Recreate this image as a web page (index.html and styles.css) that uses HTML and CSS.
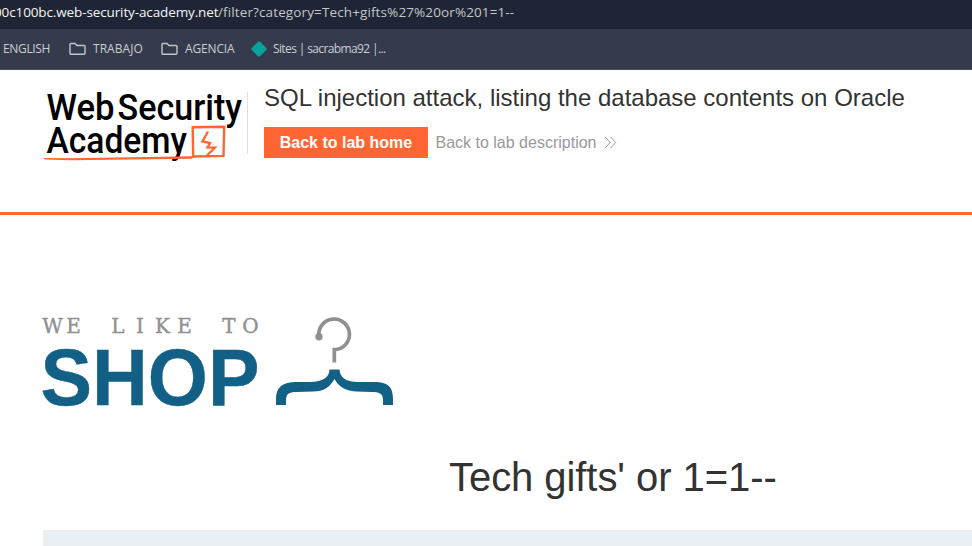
FILE: index.html
```html
<!DOCTYPE html>
<html lang="en">
<head>
<meta charset="utf-8">
<title>SQL injection attack, listing the database contents on Oracle</title>
<link rel="stylesheet" href="styles.css">
</head>
<body>
<div class="address-bar"><span class="host">00c100bc.web-security-academy.net</span><span class="path">/filter?category=Tech+gifts%27%20or%201=1--</span></div>
<nav class="bookmarks">
  <span class="bookmark english">ENGLISH</span>
  <span class="bookmark trabajo"><svg class="folder" viewBox="0 0 17 14"><path d="M1 11V2.5Q1 1.5 2 1.5H6L8 3.5H15Q16 3.5 16 4.5V11.3Q16 12.3 15 12.3H2Q1 12.3 1 11Z"/></svg><span class="label">TRABAJO</span></span>
  <span class="bookmark agencia"><svg class="folder" viewBox="0 0 17 14"><path d="M1 11V2.5Q1 1.5 2 1.5H6L8 3.5H15Q16 3.5 16 4.5V11.3Q16 12.3 15 12.3H2Q1 12.3 1 11Z"/></svg><span class="label">AGENCIA</span></span>
  <span class="bookmark sites"><svg class="diamond" viewBox="0 0 16 16"><path d="M7 .7Q8 0 9 .7L15.3 7Q16 8 15.3 9L9 15.3Q8 16 7 15.3L.7 9Q0 8 .7 7Z"/></svg><span class="label">Sites | sacrabma92 |...</span></span>
</nav>
<header class="lab-header">
  <svg class="academy-logo" viewBox="0 0 205 80">
    <g class="academy-name">
      <text x="3.5" y="35" textLength="68" lengthAdjust="spacingAndGlyphs">Web</text>
      <text x="74.5" y="35" textLength="124.5" lengthAdjust="spacingAndGlyphs">Security</text>
      <text x="3.5" y="68" textLength="140.5" lengthAdjust="spacingAndGlyphs">Academy</text>
    </g>
    <path class="underline" d="M0 73L28 73.2L149 71.3V73.7L28 75.3L2 74.6Z"/>
    <path class="frame" d="M150.2 73L149.7 42.2L181.2 41.8L180.5 70.9L150 71.5"/>
    <path class="bolt" d="M165 46.5L159.5 56.5L167 58L164.5 62.3L172 62.5L164 70.5"/>
  </svg>
  <div class="lab-info">
    <h2>SQL injection attack, listing the database contents on Oracle</h2>
    <div class="actions">
      <a class="home-button">Back to lab home</a>
      <a class="description-link">Back to lab description</a>
      <svg class="chevrons" viewBox="0 0 13 13"><path d="M1 .8L6.2 6.5L1 12.2M6.5 .8L11.7 6.5L6.5 12.2"/></svg>
    </div>
  </div>
</header>
<main>
  <svg class="shop-logo" viewBox="0 0 352 92">
    <text class="tagline" y="18.3" x="9.5 30.5 75 97 119.5 141.5 186 207.5">WELIKETO</text>
    <text class="shop" x="-2.5" y="89.7" textLength="219" lengthAdjust="spacingAndGlyphs">SHOP</text>
    <circle class="knob" cx="276" cy="21.8" r="3.7"/>
    <path class="hook" d="M276 21.5A15.3 15.3 0 1 1 292 34.6H291.3V47.5"/>
    <path class="hanger" d="M286.5 54.5H296.5C297 62 302 67 315 67H331C345 67 350 72 350 84V90H340V85C340 78 336 77 328 77L314 76.5C303 76 295.5 72 291.5 64C287 72 281 76.5 270 76.5L253 77C246 77 243 79 243 85V90H233V84C233 72 240 67 253 67H267C280 67 286.5 62 286.5 54.5Z"/>
  </svg>
  <h1>Tech gifts' or 1=1--</h1>
  <div class="filters"></div>
</main>
</body>
</html>
```
FILE: styles.css
```css
* { box-sizing: border-box; }
body {
  margin: 0;
  height: 546px;
  overflow: hidden;
  background: #fff;
  color: #333332;
  font-family: "Liberation Sans", Arial, sans-serif;
}
.address-bar {
  height: 29px;
  background: #1f2534;
  color: #c3c6cb;
  font: 13.5px/25px "Open Sans", sans-serif;
  white-space: nowrap;
  display: flex;
}
.host { color: #f4f5f7; margin-left: -6px; width: 224px; letter-spacing: -0.12px; }
.path { letter-spacing: 0.12px; }
.bookmarks {
  height: 41px;
  background: #353b4c;
  border-bottom: 1px solid #464b59;
  color: #cacdd2;
  font: 12px/40px "Open Sans", sans-serif;
  display: flex;
  padding-left: 3px;
  white-space: nowrap;
}
.bookmark { display: flex; align-items: center; height: 39px; }
.english { width: 66px; letter-spacing: -0.35px; }
.trabajo { width: 92px; letter-spacing: 0.05px; }
.agencia { width: 90px; letter-spacing: -0.15px; }
.sites { letter-spacing: -0.62px; }
.folder { width: 17px; height: 14px; margin-right: 7px; }
.folder path { fill: none; stroke: #c3c5ca; stroke-width: 1.4; }
.diamond { width: 16px; height: 16px; margin-right: 6px; }
.diamond path { fill: #08a29d; }
.lab-header {
  height: 145px;
  border-bottom: 3px solid #ff6633;
  display: flex;
  padding-left: 43px;
}
.academy-logo { width: 205px; height: 80px; margin-top: 15px; }
.academy-name {
  font: 500 37.5px Roboto, sans-serif;
  fill: #000;
}
.underline { fill: #ff6633; }
.frame { fill: none; stroke: #ff6633; stroke-width: 2.4; }
.bolt { fill: none; stroke: #ff6633; stroke-width: 2.3; }
.lab-info { padding-left: 16px; position: relative; }
.lab-info::before {
  content: "";
  position: absolute;
  left: -1px;
  top: 22px;
  width: 1px;
  height: 62px;
  background: #dedede;
}
h2 {
  margin: 14px 0 0;
  font-size: 24px;
  line-height: 28px;
  font-weight: 400;
  white-space: nowrap;
}
.actions { display: flex; align-items: center; margin-top: 15px; font-size: 16px; }
.home-button {
  width: 164px;
  height: 31px;
  background: #ff6633;
  color: #fff;
  font-weight: 700;
  line-height: 31px;
  text-align: center;
}
.description-link { color: #999; margin-left: 7.5px; }
.chevrons { width: 13px; height: 13px; margin-left: 7.5px; }
.chevrons path { fill: none; stroke: #999; stroke-width: 1; }
main { padding-left: 43px; }
.shop-logo { display: block; width: 352px; height: 92px; margin-top: 100px; overflow: visible; }
.tagline {
  font: 20px "DejaVu Serif", serif;
  fill: #919191;
  stroke: #919191;
  stroke-width: 0.4;
  text-anchor: middle;
}
.shop { font: 700 80.5px "Liberation Sans", sans-serif; fill: #126086; stroke: #126086; stroke-width: 0.4; }
.knob { fill: #8f9092; }
.hook { fill: none; stroke: #8f9092; stroke-width: 3.7; }
.hanger { fill: #126086; }
h1 {
  margin: 47px 0 0 406px;
  font-size: 40px;
  line-height: 46px;
  font-weight: 400;
  letter-spacing: -0.06px;
}
.filters { height: 16px; margin-top: 30px; background: #eaeff3; }
```
